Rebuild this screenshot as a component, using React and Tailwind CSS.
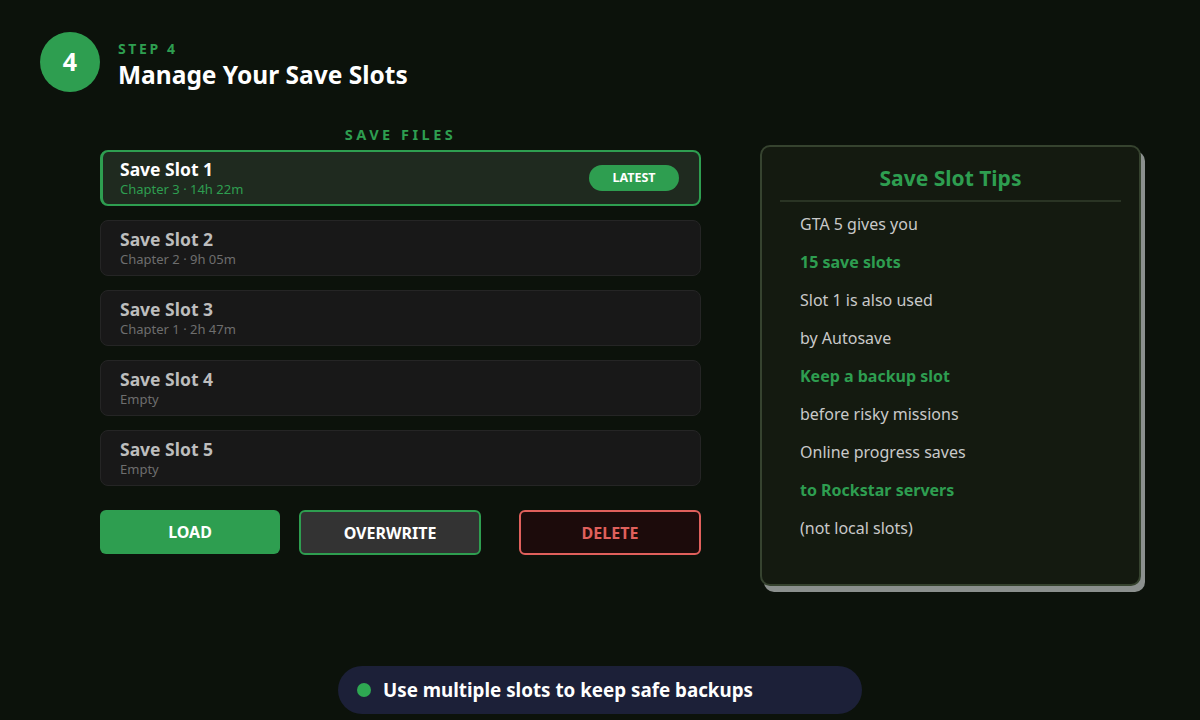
export default function App() {
  const slots = [
    { name: "Save Slot 2", sub: "Chapter 2 · 9h 05m" },
    { name: "Save Slot 3", sub: "Chapter 1 · 2h 47m" },
    { name: "Save Slot 4", sub: "Empty" },
    { name: "Save Slot 5", sub: "Empty" },
  ];
  const tips = [
    ["GTA 5 gives you", false],
    ["15 save slots", true],
    ["Slot 1 is also used", false],
    ["by Autosave", false],
    ["Keep a backup slot", true],
    ["before risky missions", false],
    ["Online progress saves", false],
    ["to Rockstar servers", true],
    ["(not local slots)", false],
  ];
  return (
    <div
      className="w-[1200px] h-[720px] bg-[#0c120b] relative overflow-hidden"
      style={{ fontFamily: '"Noto Sans", "Open Sans", sans-serif' }}
    >
      <div className="flex items-center gap-[18px] pl-[40px] pt-[32px]">
        <div className="w-[60px] h-[60px] rounded-full bg-[#2e9e50] flex items-center justify-center text-white text-[25px] font-bold">
          4
        </div>
        <div className="flex flex-col pt-[4px]">
          <div className="text-[#2e9e50] text-[14px] font-bold tracking-[2.6px] leading-[20px]">STEP 4</div>
          <div className="text-white text-[24.5px] font-bold leading-[31px]">Manage Your Save Slots</div>
        </div>
      </div>

      <div className="flex pl-[100px] pt-[32px]">
        <div className="w-[601px] flex flex-col">
          <div className="text-center text-[#2e9e50] text-[14.5px] font-bold tracking-[3.5px] leading-[20px]">SAVE FILES</div>
          <div className="mt-[6px] flex flex-col gap-[14px]">
            <div className="h-[56px] rounded-[8px] border-2 border-l-[3px] border-[#2e9e50] bg-[#1f2a1f] flex items-center justify-between pl-[17px] pr-[20px]">
              <div className="flex flex-col">
                <div className="text-white text-[17.5px] font-bold leading-[22px]">Save Slot 1</div>
                <div className="text-[#2e9e50] text-[13px] leading-[18px]">Chapter 3 · 14h 22m</div>
              </div>
              <div className="w-[90px] h-[26px] rounded-full bg-[#2e9e50] text-white text-[12.5px] font-bold flex items-center justify-center">
                LATEST
              </div>
            </div>
            {slots.map((s) => (
              <div key={s.name} className="h-[56px] rounded-[8px] border border-[#252525] bg-[#181818] flex flex-col justify-center pl-[19px]">
                <div className="text-[#bdbdbd] text-[17.5px] font-bold leading-[22px]">{s.name}</div>
                <div className="text-[#6e6e6e] text-[13px] leading-[18px]">{s.sub}</div>
              </div>
            ))}
          </div>
          <div className="mt-[24px] flex">
            <div className="w-[180px] h-[44px] rounded-[6px] bg-[#2e9e50] text-white text-[16px] font-bold flex items-center justify-center">
              LOAD
            </div>
            <div className="ml-[19px] w-[182px] h-[45px] rounded-[6px] bg-[#333333] border-2 border-[#2e9e50] text-white text-[16px] font-bold flex items-center justify-center">
              OVERWRITE
            </div>
            <div className="ml-[38px] w-[182px] h-[45px] rounded-[6px] bg-[#1c0b0b] border-2 border-[#e0605c] text-[#e0605c] text-[16px] font-bold flex items-center justify-center">
              DELETE
            </div>
          </div>
        </div>

        <div className="ml-[59px] mt-[21px] w-[381px] h-[441px] rounded-[10px] border-2 border-[#36432f] bg-[#141a10] shadow-[4px_6px_0_#8b908e] flex flex-col px-[18px]">
          <div className="text-center text-[#2e9e50] text-[21px] font-bold leading-[28px] mt-[17px] pb-[8px] border-b-2 border-[#2a3424]">
            Save Slot Tips
          </div>
          <div className="flex flex-col pl-[20px] pt-[3px]">
            {tips.map(([t, hi]) => (
              <div
                key={t}
                className={`h-[38px] flex items-center text-[16px] ${hi ? "text-[#2e9e50] font-bold" : "text-[#c9c9c9]"}`}
              >
                {t}
              </div>
            ))}
          </div>
        </div>
      </div>

      <div className="absolute left-[338px] top-[666px] w-[524px] h-[48px] rounded-full bg-[#1c2038] flex items-center pl-[19px] gap-[12px]">
        <div className="w-[14px] h-[14px] rounded-full bg-[#2ea852]" />
        <div className="text-white text-[18.8px] font-bold">Use multiple slots to keep safe backups</div>
      </div>
    </div>
  );
}
